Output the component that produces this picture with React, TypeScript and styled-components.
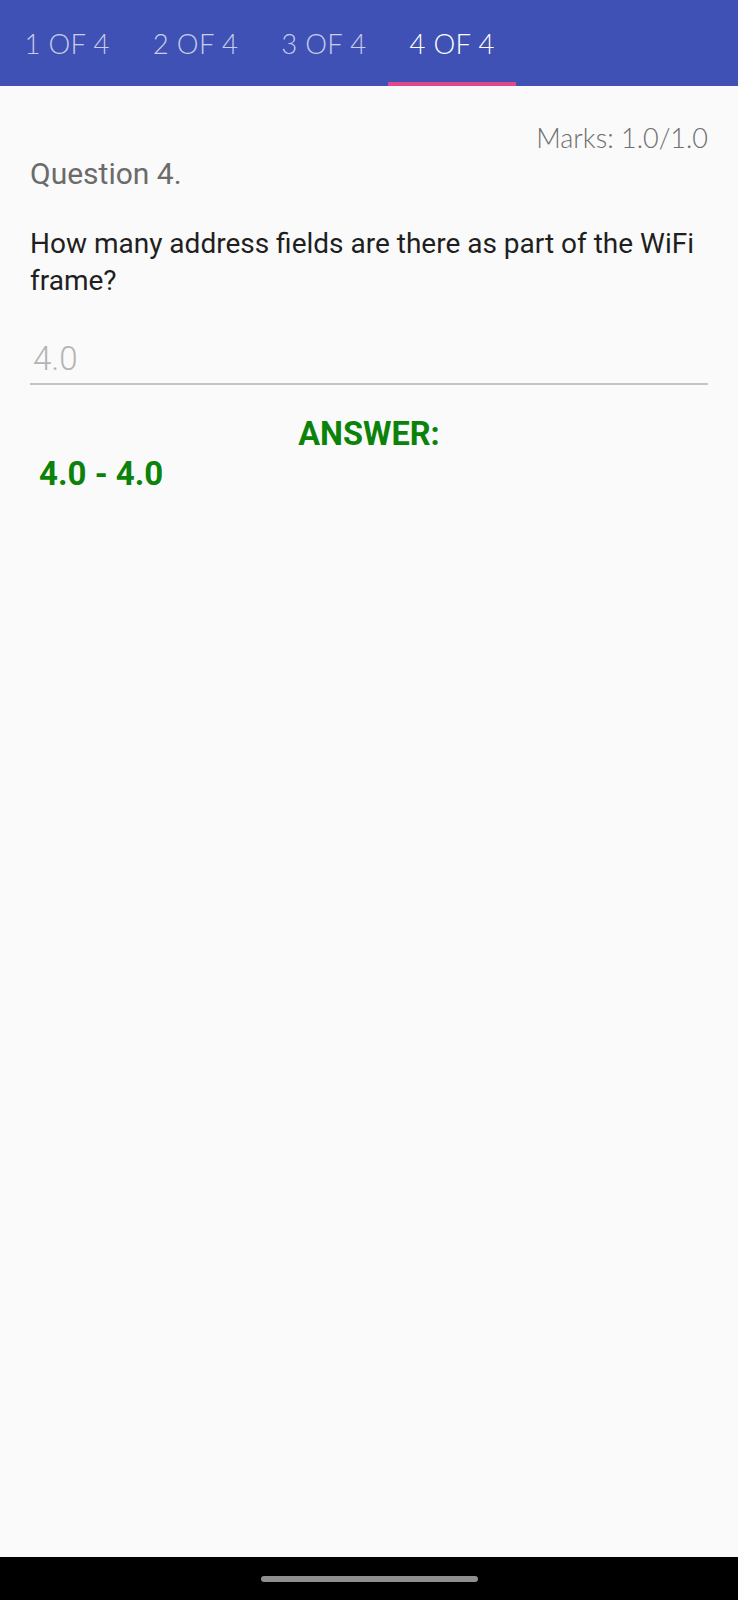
import React from "react";
import styled, { createGlobalStyle } from "styled-components";

const GlobalStyle = createGlobalStyle`
  html, body {
    margin: 0;
    padding: 0;
    background: #fafafa;
  }
  #root {
    min-height: 100vh;
  }
`;

const Screen = styled.div`
  display: flex;
  flex-direction: column;
  height: 1600px;
  background: #fafafa;
  font-family: Roboto, "Noto Sans", sans-serif;
`;

const TabBar = styled.nav`
  display: flex;
  align-items: stretch;
  height: 86px;
  padding-left: 3px;
  background-color: #3f51b5;
  box-sizing: border-box;
`;

const Tab = styled.div<{ active: boolean }>`
  position: relative;
  display: flex;
  align-items: center;
  justify-content: center;
  padding: 0 21.5px;
  font-family: Lato, "Noto Sans", sans-serif;
  font-weight: 300;
  font-size: 27.5px;
  letter-spacing: 0.3px;
  color: ${({ active }) => (active ? "#ffffff" : "rgba(255, 255, 255, 0.72)")};

  &::after {
    content: "";
    display: ${({ active }) => (active ? "block" : "none")};
    position: absolute;
    left: 0;
    right: 0;
    bottom: 0;
    height: 4px;
    background: #e0478c;
  }
`;

const Content = styled.main`
  flex-grow: 1;
  display: flex;
  flex-direction: column;
  padding: 0 30px;
`;

const Marks = styled.div`
  align-self: flex-end;
  margin-top: 35px;
  font-family: Lato, "Noto Sans", sans-serif;
  font-weight: 300;
  font-size: 27px;
  color: #6f6f6f;
`;

const QuestionTitle = styled.div`
  margin-top: 2px;
  font-size: 30px;
  color: #6b6b6b;
`;

const QuestionText = styled.p`
  margin: 34px 0 0 0;
  font-size: 28px;
  line-height: 37px;
  color: #1f1f1f;
`;

const AnswerField = styled.div`
  margin-top: 40px;
  padding: 0 0 5px 3px;
  border-bottom: 2px solid #c4c4c4;
  font-size: 33px;
  font-weight: 300;
  color: #b4b4b4;
`;

const AnswerLabel = styled.div`
  margin-top: 30px;
  text-align: center;
  font-size: 32.5px;
  font-weight: 700;
  color: #0b830b;
`;

const AnswerRange = styled.div`
  margin-top: 1px;
  padding-left: 9px;
  font-size: 33px;
  font-weight: 700;
  color: #0b830b;
`;

const NavBar = styled.div`
  height: 43px;
  display: flex;
  align-items: center;
  justify-content: center;
  background: #000;
`;

const HomePill = styled.div`
  width: 217px;
  height: 6px;
  border-radius: 3px;
  background: #8f8f8f;
`;

const tabs = ["1 OF 4", "2 OF 4", "3 OF 4", "4 OF 4"];

export default function App() {
  return (
    <>
      <GlobalStyle />
      <Screen>
        <TabBar>
          {tabs.map((t, i) => (
            <Tab key={t} active={i === 3}>
              {t}
            </Tab>
          ))}
        </TabBar>
        <Content>
          <Marks>Marks: 1.0/1.0</Marks>
          <QuestionTitle>Question 4.</QuestionTitle>
          <QuestionText>
            How many address fields are there as part of the WiFi frame?
          </QuestionText>
          <AnswerField>4.0</AnswerField>
          <AnswerLabel>ANSWER:</AnswerLabel>
          <AnswerRange>4.0 - 4.0</AnswerRange>
        </Content>
        <NavBar>
          <HomePill />
        </NavBar>
      </Screen>
    </>
  );
}
